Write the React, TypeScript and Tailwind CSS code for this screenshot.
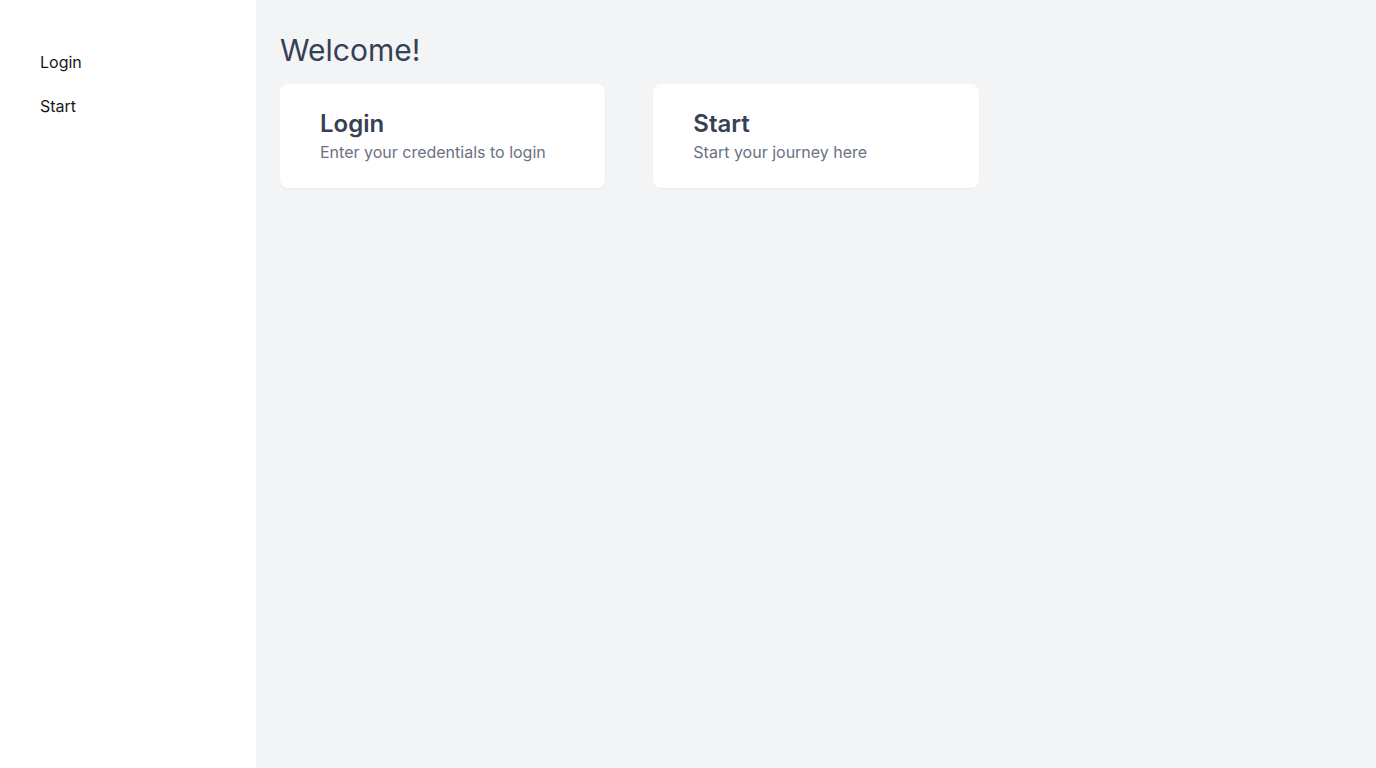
export default function App() {
  return (
    <div className="flex min-h-screen h-[768px] font-['Inter',sans-serif]">
      <aside className="w-64 shrink-0 bg-white pt-10 px-6">
        <nav className="flex flex-col">
          <a className="block px-4 py-2.5 text-base text-neutral-900">Login</a>
          <a className="block px-4 py-2.5 text-base text-neutral-900">Start</a>
        </nav>
      </aside>
      <main className="flex-1 bg-gray-100 px-6 pt-8">
        <h1 className="text-3xl text-gray-700 mb-4">Welcome!</h1>
        <div className="grid grid-cols-3 gap-12">
          <div className="bg-white rounded-lg shadow-xs px-10 py-6">
            <h2 className="text-2xl font-semibold text-gray-700">Login</h2>
            <p className="text-base text-gray-500">Enter your credentials to login</p>
          </div>
          <div className="bg-white rounded-lg shadow-xs px-10 py-6">
            <h2 className="text-2xl font-semibold text-gray-700">Start</h2>
            <p className="text-base text-gray-500">Start your journey here</p>
          </div>
        </div>
      </main>
    </div>
  );
}
